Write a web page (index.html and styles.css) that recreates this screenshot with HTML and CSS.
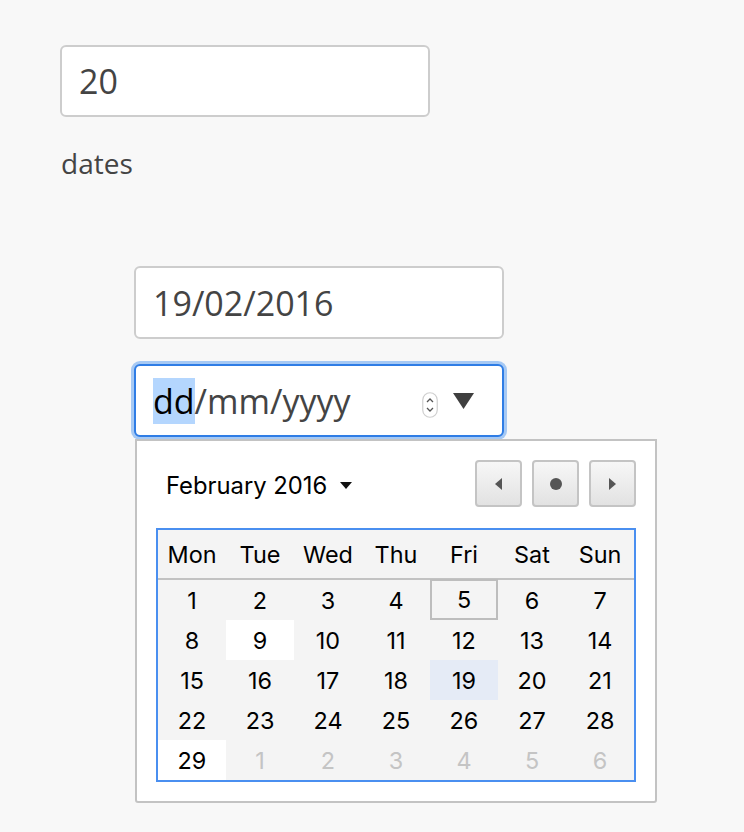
FILE: index.html
```html
<!DOCTYPE html>
<html>
<head>
<meta charset="utf-8">
<link rel="stylesheet" href="styles.css">
</head>
<body>
<div class="page">
  <div class="text-input">20</div>
  <div class="label">dates</div>
  <div class="dates">
    <div class="text-input date-input">19/02/2016</div>
    <div class="date-field">
      <div class="text-input date-input focused">
        <span class="value"><span class="sel">dd</span>/mm/yyyy</span>
        <span class="controls">
          <svg class="spinner" width="16" height="26" viewBox="0 0 16 26">
            <rect x="0.75" y="0.75" width="14.5" height="24.5" rx="7.25" fill="#fff" stroke="#cfcfcf" stroke-width="1.2"/>
            <path d="M5 10 L8 7 L11 10" fill="none" stroke="#555" stroke-width="1.3"/>
            <path d="M5 16 L8 19 L11 16" fill="none" stroke="#555" stroke-width="1.3"/>
          </svg>
          <svg class="drop" width="21" height="16" viewBox="0 0 21 16">
            <path d="M0 0 H21 L10.5 16 Z" fill="#3f3f3f"/>
          </svg>
        </span>
      </div>
      <div class="picker">
        <div class="picker-head">
          <div class="month">February 2016
            <svg class="month-caret" width="12" height="7" viewBox="0 0 12 7"><path d="M0 0 H12 L6 7 Z" fill="#111"/></svg>
          </div>
          <div class="nav">
            <div class="nav-btn"><svg width="7" height="12" viewBox="0 0 7 12"><path d="M7 0 V12 L0 6 Z" fill="#555"/></svg></div>
            <div class="nav-btn"><svg width="12" height="12" viewBox="0 0 12 12"><circle cx="6" cy="6" r="6" fill="#555"/></svg></div>
            <div class="nav-btn"><svg width="7" height="12" viewBox="0 0 7 12"><path d="M0 0 V12 L7 6 Z" fill="#555"/></svg></div>
          </div>
        </div>
        <div class="cal">
          <div class="wd">Mon</div><div class="wd">Tue</div><div class="wd">Wed</div><div class="wd">Thu</div><div class="wd">Fri</div><div class="wd">Sat</div><div class="wd">Sun</div>
          <div class="divider"></div>
          <div class="d">1</div><div class="d">2</div><div class="d">3</div><div class="d">4</div><div class="d today">5</div><div class="d">6</div><div class="d">7</div>
          <div class="d">8</div><div class="d hover">9</div><div class="d">10</div><div class="d">11</div><div class="d">12</div><div class="d">13</div><div class="d">14</div>
          <div class="d">15</div><div class="d">16</div><div class="d">17</div><div class="d">18</div><div class="d selected">19</div><div class="d">20</div><div class="d">21</div>
          <div class="d">22</div><div class="d">23</div><div class="d">24</div><div class="d">25</div><div class="d">26</div><div class="d">27</div><div class="d">28</div>
          <div class="d hover">29</div><div class="d other">1</div><div class="d other">2</div><div class="d other">3</div><div class="d other">4</div><div class="d other">5</div><div class="d other">6</div>
        </div>
      </div>
    </div>
  </div>
</div>
</body>
</html>
```
FILE: styles.css
```css
html, body {
  margin: 0;
  padding: 0;
  background: #f8f8f8;
}

.page {
  padding: 45px 0 0 60px;
  font-family: "Open Sans", "Noto Sans", sans-serif;
  color: #444;
}

.text-input {
  box-sizing: border-box;
  width: 370px;
  height: 72px;
  border: 2px solid #cdcdcd;
  border-radius: 6px;
  background: #fff;
  padding: 0 0 0 17px;
  font-size: 34px;
  display: flex;
  align-items: center;
}

.label {
  margin-top: 29px;
  padding-left: 1px;
  font-size: 28px;
  line-height: 34px;
  height: 34px;
}

.dates {
  margin-left: 74px;
  margin-top: 86px;
}

.date-input {
  height: 73px;
}

.date-field {
  margin-top: 25px;
}

.focused {
  border-color: #2f7de5;
  box-shadow: 0 0 0 3px #a6c9f4;
  justify-content: space-between;
  padding-right: 28px;
}

.value {
  display: flex;
  align-items: center;
}

.sel {
  background: #b4d6fe;
  color: #000;
}

.controls {
  display: flex;
  align-items: center;
  gap: 15px;
}

.spinner {
  display: block;
  margin-top: 8px;
}

.drop {
  display: block;
  margin-top: 1px;
}

.picker {
  position: relative;
  z-index: 2;
  margin: 2px 0 0 1px;
  box-sizing: border-box;
  width: 522px;
  height: 364px;
  border: 2px solid #c3c3c3;
  border-radius: 0 0 3px 3px;
  background: #fff;
  padding: 19px;
  font-family: "Inter", "Liberation Sans", sans-serif;
  color: #000;
}

.picker-head {
  height: 47px;
  display: flex;
  align-items: center;
  justify-content: space-between;
  margin-bottom: 21px;
}

.month {
  padding-left: 10px;
  font-size: 23.8px;
  display: flex;
  align-items: center;
  gap: 13px;
  padding-top: 3px;
}

.month-caret {
  display: block;
}

.nav {
  display: flex;
  gap: 10px;
}

.nav-btn {
  box-sizing: border-box;
  width: 47px;
  height: 47px;
  border: 2px solid #c4c4c4;
  border-radius: 4px;
  background: linear-gradient(#f7f7f7, #e2e2e2);
  display: flex;
  align-items: center;
  justify-content: center;
}

.nav-btn svg {
  display: block;
}

.cal {
  box-sizing: border-box;
  width: 480px;
  border: 2px solid #4a8ff0;
  background: #f4f4f4;
  display: grid;
  grid-template-columns: repeat(7, 68px);
  grid-template-rows: 48px 2px repeat(5, 40px);
  font-size: 23.4px;
}

.wd {
  display: flex;
  align-items: center;
  justify-content: center;
}

.divider {
  grid-column: 1 / -1;
  background: #c2c2c2;
}

.d {
  display: flex;
  align-items: center;
  justify-content: center;
  box-sizing: border-box;
}

.today {
  border: 2px solid #bdbdbd;
  margin-top: -1px;
}

.hover {
  background: #fff;
}

.selected {
  background: #e5ebf6;
}

.other {
  color: #c4c4c4;
}
```
